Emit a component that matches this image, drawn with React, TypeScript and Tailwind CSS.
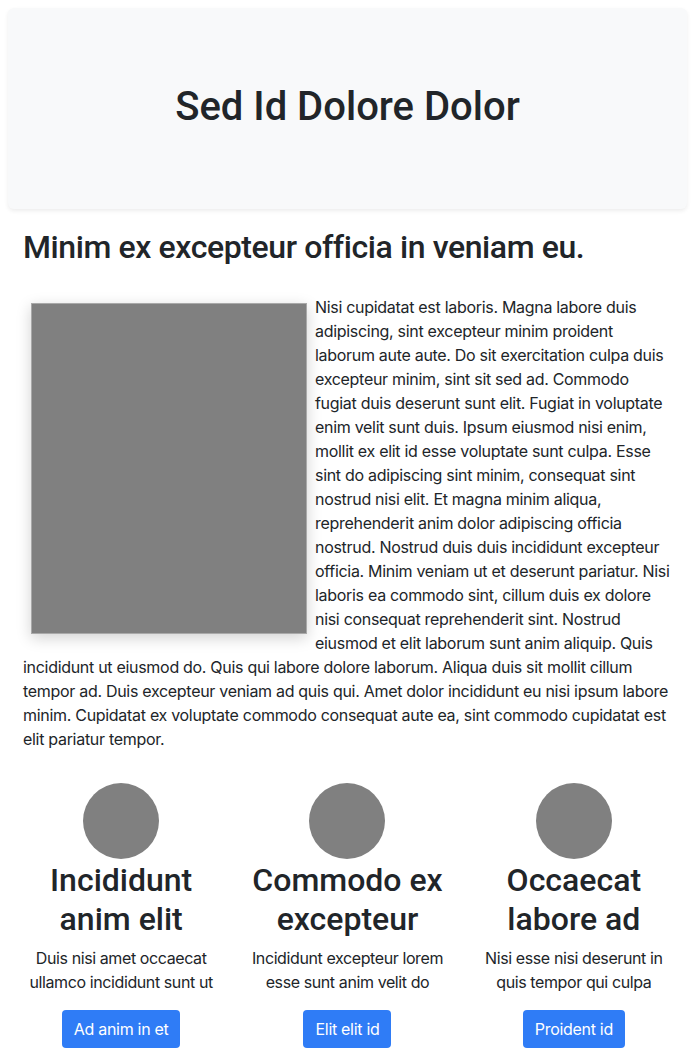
const bodyFont = { fontFamily: 'Inter, "Liberation Sans", sans-serif' }
const headFont = { fontFamily: 'Roboto, "Liberation Sans", sans-serif' }

const features = [
  {
    title: 'Incididunt anim elit',
    text: 'Duis nisi amet occaecat ullamco incididunt sunt ut',
    button: 'Ad anim in et',
  },
  {
    title: 'Commodo ex excepteur',
    text: 'Incididunt excepteur lorem esse sunt anim velit do',
    button: 'Elit elit id',
  },
  {
    title: 'Occaecat labore ad',
    text: 'Nisi esse nisi deserunt in quis tempor qui culpa',
    button: 'Proident id',
  },
]

const body =
  'Nisi cupidatat est laboris. Magna labore duis adipiscing, sint excepteur minim proident laborum aute aute. Do sit exercitation culpa duis excepteur minim, sint sit sed ad. Commodo fugiat duis deserunt sunt elit. Fugiat in voluptate enim velit sunt duis. Ipsum eiusmod nisi enim, mollit ex elit id esse voluptate sunt culpa. Esse sint do adipiscing sint minim, consequat sint nostrud nisi elit. Et magna minim aliqua, reprehenderit anim dolor adipiscing officia nostrud. Nostrud duis duis incididunt excepteur officia. Minim veniam ut et deserunt pariatur. Nisi laboris ea commodo sint, cillum duis ex dolore nisi consequat reprehenderit sint. Nostrud eiusmod et elit laborum sunt anim aliquip. Quis incididunt ut eiusmod do. Quis qui labore dolore laborum. Aliqua duis sit mollit cillum tempor ad. Duis excepteur veniam ad quis qui. Amet dolor incididunt eu nisi ipsum labore minim. Cupidatat ex voluptate commodo consequat aute ea, sint commodo cupidatat est elit pariatur tempor.'

export default function App() {
  return (
    <div className="min-h-screen bg-white p-2 text-[#212529]" style={bodyFont}>
      {/* Jumbotron */}
      <div className="flex h-[201px] items-center justify-center rounded-md bg-[#f8f9fa] shadow-[0_2px_4px_rgba(0,0,0,0.075)]">
        <h1 className="-mt-1 text-[40px] font-medium leading-[1.2]" style={headFont}>
          Sed Id Dolore Dolor
        </h1>
      </div>

      <div className="px-[15px]">
        <h2 className="mt-[19px] mb-[29px] text-[32px] font-medium leading-[1.2] tracking-[-0.4px]" style={headFont}>
          Minim ex excepteur officia in veniam eu.
        </h2>

        <p className="mb-4 text-[16px] leading-6 tracking-[-0.3px]">
          <span className="float-left m-2 h-[331px] w-[276px] border border-[#a9a9a9] bg-[#808080] shadow-[0_4px_14px_rgba(0,0,0,0.18)]" />
          {body}
        </p>
      </div>

      {/* Feature columns */}
      <div className="mt-8 grid grid-cols-3">
        {features.map((f) => (
          <div key={f.title} className="flex flex-col items-center px-[15px] text-center">
            <div className="h-[76px] w-[76px] rounded-full bg-[#808080]" />
            <h2 className="mt-[2px] mb-2 text-[32px] font-medium leading-[1.2]" style={headFont}>
              {f.title}
            </h2>
            <p className="mb-4 text-[16px] leading-6 tracking-[-0.4px]">{f.text}</p>
            <button className="h-[38px] rounded-[4px] bg-[#2f7cf6] px-3 text-[16px] text-white tracking-[-0.3px]">
              {f.button}
            </button>
          </div>
        ))}
      </div>
    </div>
  )
}
